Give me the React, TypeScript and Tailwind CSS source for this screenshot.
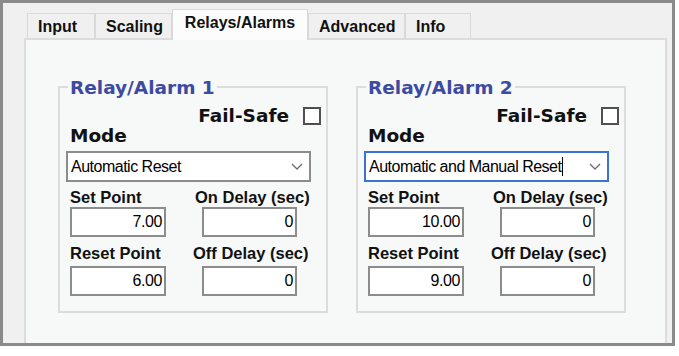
import React from "react";

type GroupProps = {
  title: string;
  mode: string;
  focused?: boolean;
  setPoint: string;
  resetPoint: string;
  onDelay: string;
  offDelay: string;
};

function Tab({ label, width, active }: { label: string; width: string; active?: boolean }) {
  if (active) {
    return (
      <div
        className={`${width} h-[31px] -mb-[2px] border border-b-0 border-[#d9d9d9] bg-[#fcfcfc] pt-[3px] text-center font-['Liberation_Sans',sans-serif] text-[16px] font-bold leading-[20px] text-[#111]`}
      >
        {label}
      </div>
    );
  }
  return (
    <div
      className={`${width} h-[25px] border border-b-0 border-[#d9d9d9] bg-[#f0f0f0] pt-[3px] pl-[10px] font-['Liberation_Sans',sans-serif] text-[16px] font-bold leading-[20px] text-[#111]`}
    >
      {label}
    </div>
  );
}

function NumBox({ value, className = "" }: { value: string; className?: string }) {
  return (
    <div
      className={`flex h-[30px] items-center justify-end border-2 border-[#8c8c8c] bg-white pr-[2px] font-['Liberation_Sans',sans-serif] text-[16px] tracking-[-0.4px] text-black ${className}`}
    >
      {value}
    </div>
  );
}

function Label({ children, className = "" }: { children: React.ReactNode; className?: string }) {
  return (
    <div className={`h-[18px] whitespace-nowrap font-['Liberation_Sans',sans-serif] text-[16.5px] font-bold leading-[18px] text-[#111] ${className}`}>
      {children}
    </div>
  );
}

function Group({ title, mode, focused, setPoint, resetPoint, onDelay, offDelay }: GroupProps) {
  return (
    <div className="relative w-[270px] border-2 border-[#dcdcdc] pl-[10px] pr-[5px] pt-[18px] pb-[15px]">
      <div className="absolute -top-[12px] left-[8px] bg-[#f7f8f8] px-[2px] font-['DejaVu_Sans',sans-serif] text-[18.5px] font-bold leading-[24px] text-[#3c4ba2]">
        {title}
      </div>

      {/* Fail-Safe */}
      <div className="flex h-[20px] items-center justify-end gap-[14px]">
        <span className="font-['DejaVu_Sans',sans-serif] text-[18.5px] font-bold leading-[20px] text-[#111]">
          Fail-Safe
        </span>
        <span className="h-[18px] w-[18px] border-2 border-[#505050] bg-white"></span>
      </div>

      <div className="h-[20px] font-['DejaVu_Sans',sans-serif] text-[18.5px] font-bold leading-[20px] text-[#111]">
        Mode
      </div>

      {/* Mode dropdown */}
      <div
        className={`-ml-[4px] mt-[5px] flex h-[31px] w-[245px] items-center justify-between border-2 bg-white pl-[3px] pr-[6px] ${
          focused ? "border-[#3a73d0]" : "border-[#8c8c8c]"
        }`}
      >
        <div className="flex items-center font-['Liberation_Sans',sans-serif] text-[16px] tracking-[-0.5px] text-black">
          <span>{mode}</span>
          {focused && <span className="ml-[1px] h-[19px] w-px bg-black"></span>}
        </div>
        <svg width="12" height="7" viewBox="0 0 12 7" fill="none">
          <path d="M1 1l5 5 5-5" stroke="#6b6b6b" strokeWidth="1.3" />
        </svg>
      </div>

      <div className="mt-[6px] flex">
        <div className="w-[125px]">
          <Label>Set Point</Label>
          <NumBox value={setPoint} className="mt-[1px] w-[96px]" />
        </div>
        <div>
          <Label>On Delay (sec)</Label>
          <NumBox value={onDelay} className="ml-[7px] mt-[1px] w-[95px]" />
        </div>
      </div>

      <div className="mt-[7px] flex">
        <div className="w-[125px]">
          <Label>Reset Point</Label>
          <NumBox value={resetPoint} className="mt-[4px] w-[96px]" />
        </div>
        <div>
          <Label className="-ml-[2px]">Off Delay (sec)</Label>
          <NumBox value={offDelay} className="ml-[7px] mt-[4px] w-[95px]" />
        </div>
      </div>
    </div>
  );
}

export default function App() {
  return (
    <div className="h-[356px] w-[679px] bg-white">
      <div className="flex h-[346px] w-[675px] flex-col border-[3px] border-[#8a8a8a] bg-[#f0f0f0] pl-[21px] pr-[5px] pt-[6px]">
        {/* Tabs */}
        <div className="relative z-10 ml-[3px] flex items-end">
          <Tab label="Input" width="w-[68px]" />
          <Tab label="Scaling" width="w-[77px]" />
          <Tab label="Relays/Alarms" width="w-[136px]" active />
          <Tab label="Advanced" width="w-[97px]" />
          <Tab label="Info" width="w-[66px]" />
        </div>

        {/* Tab panel */}
        <div className="flex flex-1 items-start gap-[28px] border-l-2 border-r-2 border-t-2 border-[#dcdcdc] bg-[#f7f8f8] pl-[32px] pt-[46px]">
          <Group
            title="Relay/Alarm 1"
            mode="Automatic Reset"
            setPoint="7.00"
            resetPoint="6.00"
            onDelay="0"
            offDelay="0"
          />
          <Group
            title="Relay/Alarm 2"
            mode="Automatic and Manual Reset"
            focused
            setPoint="10.00"
            resetPoint="9.00"
            onDelay="0"
            offDelay="0"
          />
        </div>
      </div>
    </div>
  );
}
